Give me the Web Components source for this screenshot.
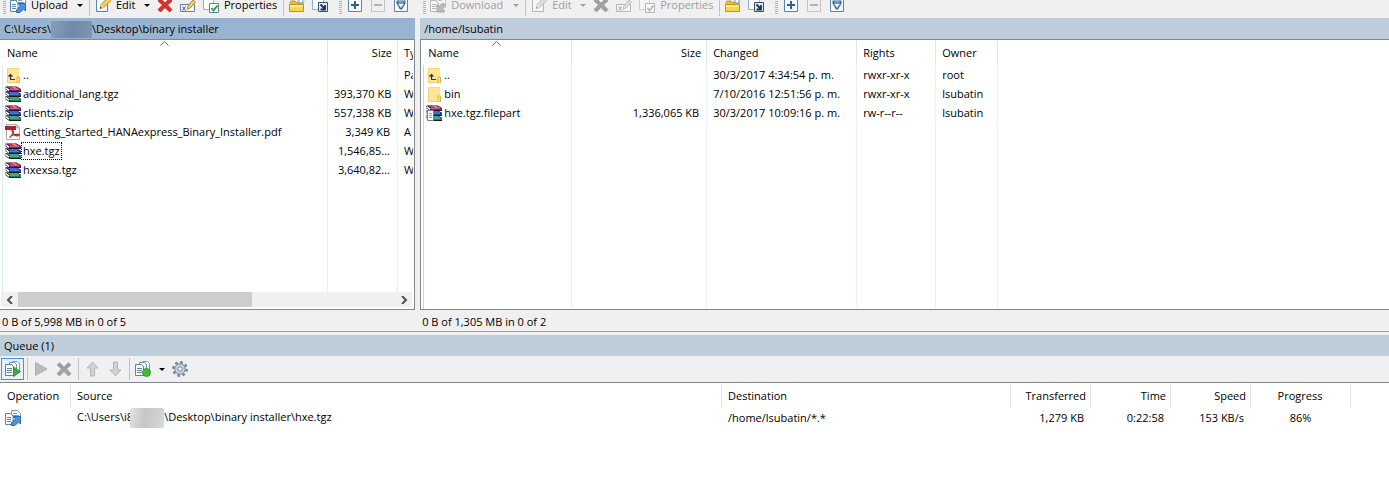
<!DOCTYPE html>
<html lang="en">
<head>
<meta charset="utf-8">
<title>File transfer</title>
<style>
html,body{margin:0;background:#fff}
body{font:11px/16px "Open Sans","Noto Sans",sans-serif;color:#000}
</style>
</head>
<body>
<transfer-app></transfer-app>
<script>
const book = (y, cover, dark, light) => `<path d="M.5 ${y}h11l4.500 2.500v3.200h-11.500l-4-2.700z" fill="#15151d"/><path d="M1.500 ${y + .3}h9.800l3.700 2.200h-10z" fill="${cover}"/><path d="M5 ${y + 2.600}h11v2.200h-11z" fill="${dark}"/><path d="M5 ${y + 2.900}h9" stroke="${light}" stroke-width=".6"/><path d="M.8 ${y + 1.500}l3.400 2.500" stroke="#fff" stroke-width="1.500"/>`;
const ICONS = {
  upload: `<path d="M6.5.5h6l3 3v7h-9z" fill="#f4f8fc" stroke="#7d9cbc"/><path d="M8 3.500h4M8 5.500h6M8 7.500h6" stroke="#7d9cbc"/><path d="M.5 3.500h5l2.500 2.500v8.500h-7.500z" fill="#fff" stroke="#5c83ab"/><path d="M2 7.500h4M2 9.500h4M2 11.500h4" stroke="#5c83ab"/><path d="M6.500 15.500v-2.500l4-4-2-2.500h7v7.500l-2-2-3.500 3.500z" fill="#4d8fe0" stroke="#2b68b4"/>`,
  download: `<path d="M6.500.5h6l3 3v7h-9z" fill="#f4f8fc" stroke="#7d9cbc"/><path d="M8 3.500h4" stroke="#7d9cbc"/><path d="M.5 3.500h5l3 3v8h-8z" fill="#fff" stroke="#5c83ab"/><path d="M2 7.500h4M2 9.500h4M2 11.500h4" stroke="#5c83ab"/><path d="M15.500 7.500l-3 3 2 4.500h-7.500v-7.500l2 2 3-3z" fill="#4d8fe0" stroke="#2b68b4"/>`,
  edit: `<path d="M1.500 1.500h11v13h-11z" fill="#fbfdff" stroke="#5c83ab"/><path d="M5 11.500l1-4 7-7 3 3-7 7z" fill="#f7cf4a" stroke="#a0763a" stroke-width=".8"/><path d="M5 11.500l1-4 3 3z" fill="#f2dcae"/><path d="M5 11.500l.5-2 1.500 1.500z" fill="#333"/>`,
  del: `<path d="M3.500 1.500l4.500 4.500 4.500-4.500 2.500 2.500-4.500 4 4.500 4.500-2.500 2.500-4.500-4.500-4.500 4.500-2.500-2.500 4.500-4.500-4.500-4z" fill="#d9302a" stroke="#b31b17" stroke-width=".7"/>`,
  rename: `<path d="M.5 7.500h14v7h-14z" fill="#fff" stroke="#5c83ab"/><path d="M2.500 9.500l3 4M5.500 9.500l-3 4" stroke="#35506e"/><path d="M7 12.500l.8-3.500 5.200-6 2.500 2-5.300 6z" fill="#f7cf4a" stroke="#a0763a" stroke-width=".8"/>`,
  props: `<path d="M.5.5h7l3 3v9h-10z" fill="#fbfdff" stroke="#8fadd0"/><path d="M6.500 6.500h9v9h-9z" fill="#fff" stroke="#5c83ab"/><path d="M8.500 11l2 2.500 4-5" fill="none" stroke="#35a12c" stroke-width="2"/>`,
  newdir: `<path d="M1 5.500l1-1.500h4l1 1.500h7v2h-13z" fill="#f1c232" stroke="#b88a12" stroke-width=".8"/><path d="M12 0v7M8.500 4h7M9.500 1.500l5 5M14.500 1.500l-5 5" stroke="#7f9fc4" stroke-width="1.200"/><circle cx="12" cy="4" r="1.500" fill="#fff"/><path d="M.5 7.500h14v7h-14z" fill="#fbd443" stroke="#c09318"/><path d="M1 8h13v2h-13z" fill="#fdeea3"/>`,
  link: `<path d="M.5.5h8l3 3v9h-11z" fill="#fbfdff" stroke="#8fadd0"/><path d="M6.500 5.500h9v9h-9z" fill="#e3eaf2" stroke="#35506e"/><path d="M8.500 7.500l4 4M13 8v4.500h-4.500" fill="none" stroke="#1c3450" stroke-width="1.800"/>`,
  plus: `<path d="M1.500 1.500h13v13h-13z" fill="#f7fafd" stroke="#5c83ab"/><path d="M8 4v8M4 8h8" stroke="#315f92" stroke-width="2"/>`,
  minus: `<path d="M1.500 1.500h13v13h-13z" fill="#efefef" stroke="#c4c4c4"/><path d="M4 8h8" stroke="#b4b4b4" stroke-width="2"/>`,
  filter: `<path d="M1.500 1.500h13v13h-13z" fill="#f7fafd" stroke="#5c83ab"/><path d="M3.500 3.500h9v3l-3.500 6h-2l-3.500-6z" fill="#3f6b9b"/><path d="M5.500 5h5M5.500 7h5l-2.500 3.500z" fill="#f4f8fc" stroke="#dce7f2" stroke-width=".8"/>`,
  rar: book(10.200, '#2fb574', '#128a50', '#a9efc6') + book(5.300, '#3f66dc', '#1e3f9c', '#9fd0ff') + book(.4, '#b82a80', '#8b1a62', '#f3b4dc') + `<path d="M6 .4h3l3.500 2.300h-2.500z" fill="#d8b23c"/>`,
  pdf: `<path d="M1.500.5h10l3 3v12h-13z" fill="#fff" stroke="#a9a9a9"/><path d="M11 .5v3.500h3.500z" fill="#ddd" stroke="#999" stroke-width=".6"/><path d="M0 2h11v4h-11z" fill="#b32025"/><path d="M4.500 13.500c2.500-2 4.500-5 3.500-7.500-1-1-1.500 1 0 3 1.500 2.500 3.500 3.500 5.500 2.500s-1-1.500-3.500-1c-2.500.5-4.500 1.500-5.500 3z" fill="none" stroke="#b32025" stroke-width="1.200"/>`,
  folder: `<path d="M2 1h12v15h-12z" fill="#ffe596"/><path d="M2 1h12v1h-12z" fill="#f6d77c"/><path d="M2.500 1.500v14h9" fill="none" stroke="#efcf70"/><path d="M12 10h2.500v6h-2.500z" fill="#ffe08a" stroke="#e0b24a"/>`,
  run: `<path d="M7.500.5h5l2 2v9h-7z" fill="#f4f8fc" stroke="#7d9cbc"/><path d="M4.500 1.500h5l2 2v9h-7z" fill="#f4f8fc" stroke="#6d90b5"/><path d="M.5 3.500h6l2 2v9h-8z" fill="#fff" stroke="#5c83ab"/><path d="M2 7.500h5M2 9.500h5M2 11.500h5" stroke="#5c83ab"/>`,
  play: `<path d="M2.500 1.500l11.500 6.500-11.500 6.500z" fill="#bcbcbc" stroke="#aeaeae"/>`,
  up: `<path d="M8.500 1l5.500 6h-3.500v8h-4v-8h-3.500z" fill="#d2d2d2" stroke="#b5b5b5"/>`,
  down: `<path d="M8.500 15l5.500-6h-3.500v-8h-4v8h-3.500z" fill="#d2d2d2" stroke="#b5b5b5"/>`,
  gear: `<circle cx="8" cy="8" r="6.700" fill="none" stroke="#71859b" stroke-width="2.400" stroke-dasharray="2.630 2.630"/><circle cx="8" cy="8" r="5.300" fill="#c9d2dc" stroke="#71859b"/><circle cx="8" cy="8" r="2.200" fill="#f5f5f5" stroke="#71859b"/>`
};
ICONS.parent = ICONS.folder + `<path d="M5.500 12v-4.500M3.500 9.500l2-2 2 2M5 12.500h5" fill="none" stroke="#333" stroke-width="1.200"/>`;
ICONS.part = ICONS.rar + `<path d="M1.500 5.500h6v10h-6z" fill="#fff" stroke="#5c83ab"/><path d="M3 8.500h3M3 10.500h3M3 12.500h3" stroke="#7d9cbc"/>`;
ICONS.queue = ICONS.run + `<circle cx="11.500" cy="11.500" r="4" fill="#3fbe35" stroke="#2c8a25" stroke-width=".8"/>`;
ICONS.runplay = ICONS.run + `<path d="M8.500 6l7 4.500-7 5z" fill="#3fae35" stroke="#2c8a25" stroke-width=".8"/>`;

const define = (name, html, setup) => customElements.define(name, class extends HTMLElement {
  connectedCallback() {
    if (this.shadowRoot) return;
    const root = this.attachShadow({mode: 'open'});
    root.innerHTML = html;
    if (setup) setup(this, root);
  }
});

define('ui-icon', `<style>:host{display:block;flex:none;width:16px;height:16px}svg{display:block}:host([off]) svg{filter:grayscale(1);opacity:.5}</style><svg width="16" height="16" viewBox="0 0 16 16" aria-hidden="true"></svg>`,
  (el, root) => { root.querySelector('svg').innerHTML = ICONS[el.getAttribute('name')]; });

define('ui-sep', `<style>:host{display:block;flex:none;width:1px;height:22px;margin:0 1px 0 3px;background:#c3c3c3}</style>`);
define('ui-grip', `<style>:host{display:block;flex:none;width:3px;height:18px;margin-left:3px;background:repeating-linear-gradient(#f0f0f0 0 1px,#b4b4b4 1px 2px)}:host([mid]){margin:0 1px 0 8px}</style>`);

define('tool-button', `<style>
:host{display:block;flex:none}
button{font:inherit;font-size:12px;color:inherit;display:flex;align-items:center;gap:5px;border:0;background:none;margin:0;padding:0 3px 0 4px;height:22px;box-sizing:border-box;white-space:nowrap}
span{font-size:11px;text-align:left}
:host([off]) button{color:#a0a0a0}
:host([active]) button{border:1px solid #3399f2;background:#e5f1fb;margin-left:1px;padding:0 2px 0 3px}
.tri{width:0;height:0;border:3px solid transparent;border-top-color:currentColor;border-bottom:0;margin:1px 0 0 3px}
</style><button type="button"></button>`, (el, root) => {
  const b = root.querySelector('button');
  const icon = document.createElement('ui-icon');
  icon.setAttribute('name', el.getAttribute('icon'));
  b.append(icon);
  if (el.hasAttribute('off')) { icon.setAttribute('off', ''); b.disabled = true; }
  if (el.textContent) {
    const s = document.createElement('span');
    s.style.minWidth = el.getAttribute('label-width') + 'px';
    s.append(document.createElement('slot'));
    b.append(s);
  } else b.setAttribute('aria-label', el.getAttribute('label'));
  if (el.hasAttribute('menu')) { const t = document.createElement('i'); t.className = 'tri'; b.append(t); }
});

define('pane-tools', `<style>
:host{display:flex;align-items:flex-end;height:18px;overflow:hidden;background:#f0f0f0}
div{display:flex;align-items:center;height:22px;margin-bottom:2px}
</style><div></div>`, (el, root) => {
  const off = el.hasAttribute('remote') ? 'off' : '';
  const main = off ? '<tool-button icon="download" label-width="54" off menu>Download</tool-button>' : '<tool-button icon="upload" label-width="38" menu>Upload</tool-button>';
  root.querySelector('div').innerHTML = `<ui-grip></ui-grip>${main}<ui-sep></ui-sep>
<tool-button icon="edit" label-width="20" ${off} menu>Edit</tool-button><tool-button icon="del" ${off} label="Delete"></tool-button><tool-button icon="rename" ${off} label="Rename"></tool-button><tool-button icon="props" label-width="53" ${off}>Properties</tool-button><ui-sep></ui-sep>
<tool-button icon="newdir" label="Create directory"></tool-button><tool-button icon="link" label="Add link"></tool-button><ui-grip mid></ui-grip>
<tool-button icon="plus" label="Select files"></tool-button><tool-button icon="minus" label="Unselect files"></tool-button><tool-button icon="filter" label="Filter"></tool-button>`;
});

define('title-bar', `<style>:host{display:flex;align-items:center;height:21px;box-sizing:border-box;padding:1px 0 0 4px;background:var(--bar,#bfcddb);white-space:nowrap}</style><slot></slot>`);
define('status-bar', `<style>:host{display:block;height:21px;line-height:24px;box-sizing:border-box;padding-left:2px;background:#f0f0f0}</style><slot></slot>`);
define('redacted-text', `<style>:host{display:inline-block;vertical-align:middle;border-radius:2px;background:var(--ink)}</style>`);

define('scroll-strip', `<style>
:host{display:flex;height:15px;margin:0 2px 2px 1px;background:#f0f0f0}
button{flex:none;width:17px;padding:0;border:0;background:none;display:grid;place-items:center}
.track{flex:1;display:flex}.thumb{width:62%;background:#cdcdcd}
</style><button type="button" aria-label="Scroll left"><svg width="8" height="8" viewBox="0 0 8 8"><path d="M6 0L2 4l4 4" fill="none" stroke="#505050" stroke-width="2"/></svg></button><div class="track"><div class="thumb"></div></div><button type="button" aria-label="Scroll right"><svg width="8" height="8" viewBox="0 0 8 8"><path d="M2 0l4 4-4 4" fill="none" stroke="#505050" stroke-width="2"/></svg></button>`);

const LISTS = {
  local: {
    cols: [['Name', 326], ['Size', 70], ['Type', 0]],
    rows: [
      ['parent', '..', '', 'Pa'],
      ['rar', 'additional_lang.tgz', '393,370 KB', 'W'],
      ['rar', 'clients.zip', '557,338 KB', 'W'],
      ['pdf', 'Getting_Started_HANAexpress_Binary_Installer.pdf', '3,349 KB', 'A'],
      ['rar', 'hxe.tgz', '1,546,85...', 'W'],
      ['rar', 'hxexsa.tgz', '3,640,82...', 'W']
    ]
  },
  remote: {
    cols: [['Name', 149], ['Size', 135], ['Changed', 150], ['Rights', 79], ['Owner', 62], ['', 0]],
    rows: [
      ['parent', '..', '', '30/3/2017 4:34:54 p. m.', 'rwxr-xr-x', 'root'],
      ['folder', 'bin', '', '7/10/2016 12:51:56 p. m.', 'rwxr-xr-x', 'lsubatin'],
      ['part', 'hxe.tgz.filepart', '1,336,065 KB', '30/3/2017 10:09:16 p. m.', 'rw-r--r--', 'lsubatin']
    ]
  }
};

define('file-list', `<style>
:host{display:grid;grid-template-rows:1fr auto;min-height:269px;background:#fff;border-top:1px solid #828790;border-bottom:1px solid #828790;overflow:hidden}
:host([local]){border-right:1px solid #828790}
:host([remote]){border-left:1px solid #828790}
.table{margin:0 1px 0 2px;display:grid;overflow:hidden}
table{border-collapse:separate;border-spacing:0;table-layout:fixed;width:100%;height:100%}
th,td{padding:0 7px 0 6px;text-align:left;font-weight:400;white-space:nowrap;overflow:hidden;box-sizing:border-box;border-right:1px solid #e8f1fb}
th{height:25px;border-color:#e3e3e3;position:relative}
tr.f td{height:19px}
th:last-child,td:last-child{border-right:0;padding-right:0}
th:nth-child(2),td:nth-child(2){text-align:right}
th:nth-child(2){padding-right:5px}
th:first-child{padding-left:5px}
td:first-child{border-left:1px solid var(--edge,#dcebfa);padding:0}
td:first-child div{display:flex;align-items:center;gap:1px;height:19px;padding-left:2px}
td span{padding:0 1px;line-height:16px}
.focus{outline:1px dotted #000}
.caret{position:absolute;left:50%;top:1px;margin-left:-5px}
</style><div class="table"><table><colgroup></colgroup><thead><tr></tr></thead><tbody></tbody></table></div><slot></slot>`, (el, root) => {
  const cfg = LISTS[el.hasAttribute('local') ? 'local' : 'remote'];
  root.querySelector('colgroup').innerHTML = cfg.cols.map(c => `<col${c[1] ? ` style="width:${c[1]}px"` : ''}>`).join('');
  root.querySelector('thead tr').innerHTML = cfg.cols.map((c, i) => `<th scope="col">${c[0]}${i ? '' : '<svg class="caret" width="9" height="5" viewBox="0 0 9 5" aria-hidden="true"><path d="M.5 4.500l4-4 4 4" fill="none" stroke="#6d6d6d"/></svg>'}</th>`).join('');
  root.querySelector('tbody').innerHTML = cfg.rows.map(r => `<tr class="f"><td><div><ui-icon name="${r[0]}"></ui-icon><span${r[1] === 'hxe.tgz' ? ' class="focus"' : ''}>${r[1]}</span></div></td>${cfg.cols.slice(1).map((c, i) => `<td>${r[i + 2] || ''}</td>`).join('')}</tr>`).join('') + `<tr>${cfg.cols.map(() => '<td></td>').join('')}</tr>`;
});

define('file-pane', `<style>:host{display:flex;flex-direction:column;min-width:0;background:#f0f0f0}</style><slot></slot>`);

define('queue-panel', `<style>
:host{display:flex;flex-direction:column;flex:1;border-top:1px solid #a0a0a0;background:#f0f0f0}
title-bar{margin-top:3px}
.tools{display:flex;align-items:center;height:26px;border-bottom:1px solid #828790}
.body{flex:1;background:#fff;padding-top:1px}
table{border-collapse:separate;border-spacing:0;table-layout:fixed;width:100%}
th,td{padding:0 7px 0 6px;text-align:left;font-weight:400;white-space:nowrap;overflow:hidden;box-sizing:border-box}
th{height:24px;border-right:1px solid #e3e3e3}
th:first-child{padding-left:7px}
th:last-child{border:0}
td{height:20px}
.n{text-align:right}th.n{padding-right:4px}
.c{text-align:center}
td:first-child{padding-left:5px}
redacted-text{width:34px;height:20px;margin-left:-3px;--ink:linear-gradient(100deg,#e2e2e2,#c6c6c6 45%,#d8d8d8)}
</style>
<title-bar>Queue (1)</title-bar>
<div class="tools"><tool-button icon="runplay" active label="Process queue"></tool-button><ui-sep></ui-sep><tool-button icon="play" label="Execute"></tool-button><tool-button icon="del" off label="Delete"></tool-button><ui-sep></ui-sep><tool-button icon="up" label="Move up"></tool-button><tool-button icon="down" label="Move down"></tool-button><ui-sep></ui-sep><tool-button icon="queue" menu label="When done"></tool-button><tool-button icon="gear" label="Preferences"></tool-button></div>
<div class="body"><table>
<colgroup><col style="width:71px"><col><col style="width:289px"><col style="width:80px"><col style="width:80px"><col style="width:80px"><col style="width:100px"><col style="width:38px"></colgroup>
<thead><tr><th>Operation</th><th>Source</th><th>Destination</th><th class="n">Transferred</th><th class="n">Time</th><th class="n">Speed</th><th class="c">Progress</th><th></th></tr></thead>
<tbody><tr><td><ui-icon name="upload"></ui-icon></td><td>C:\\Users\\i8<redacted-text></redacted-text>\\Desktop\\binary installer\\hxe.tgz</td><td>/home/lsubatin/*.*</td><td class="n">1,279 KB</td><td class="n">0:22:58</td><td class="n">153 KB/s</td><td class="c">86%</td><td></td></tr></tbody>
</table></div>`);

define('transfer-app', `<style>
:host{display:flex;flex-direction:column;min-height:100vh;background:#f0f0f0}
.panes{display:grid;grid-template-columns:minmax(0,3fr) 5px minmax(0,7fr)}
.local{--bar:#99b4d1}
.local redacted-text{width:41px;height:17px;--ink:linear-gradient(100deg,#869fbd,#7189a8 50%,#7e96b4)}
.remote{--edge:#b9d6f5;grid-column:3}
</style>
<div class="panes">
<file-pane class="local"><pane-tools></pane-tools><title-bar>C:\\Users\\<redacted-text></redacted-text>\\Desktop\\binary installer</title-bar><file-list local><scroll-strip></scroll-strip></file-list><status-bar>0 B of 5,998 MB in 0 of 5</status-bar></file-pane>
<file-pane class="remote"><pane-tools remote></pane-tools><title-bar>/home/lsubatin</title-bar><file-list remote></file-list><status-bar>0 B of 1,305 MB in 0 of 2</status-bar></file-pane>
</div>
<queue-panel></queue-panel>`);
</script>
</body>
</html>
